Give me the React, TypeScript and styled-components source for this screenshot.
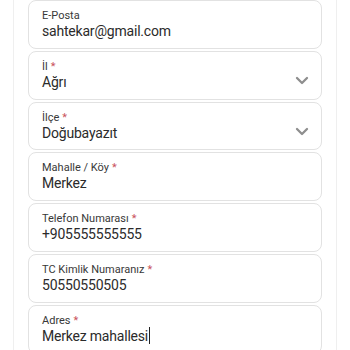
import React from 'react';
import styled, { createGlobalStyle } from 'styled-components';

const GlobalStyle = createGlobalStyle`
    html, body {
        margin: 0;
        padding: 0;
        background: #ffffff;
        overflow: hidden;
    }
    body {
        font-family: Roboto, "Noto Sans", "Liberation Sans", sans-serif;
    }
`;

const StyledPage = styled.div`
    margin: 0 13px;
    min-height: 350px;
    border-left: 1px solid #efefef;
    border-right: 1px solid #efefef;
    padding: 0 14px;
    display: flex;
    flex-direction: column;
    gap: 2px;
`;

const StyledField = styled.div`
    box-sizing: border-box;
    height: 48.8px;
    border: 1px solid #e2e2e2;
    border-radius: 8px;
    padding: 8px 12px 0 13px;
    display: flex;
    align-items: center;
    gap: 8px;
`;

const StyledText = styled.div`
    flex: 1;
    display: flex;
    flex-direction: column;
    align-self: flex-start;
`;

const StyledLabel = styled.div`
    font-size: 11px;
    line-height: 13px;
    color: #383838;
`;

const StyledAsterisk = styled.span`
    color: #c9525c;
    margin-left: 3px;
`;

const StyledValue = styled.div`
    font-size: 14px;
    line-height: 18px;
    letter-spacing: -0.2px;
    color: #2b2b2b;
    display: flex;
    align-items: center;
`;

const StyledCaret = styled.span`
    display: inline-block;
    width: 1px;
    height: 17px;
    margin-left: 1px;
    background: #222222;
`;

const StyledChevron = styled.svg`
    width: 14px;
    height: 9px;
    margin-top: 3px;
    flex-shrink: 0;
`;

type Field = {
    label: string;
    value: string;
    required?: boolean;
    select?: boolean;
    caret?: boolean;
};

const fields: Field[] = [
    { label: 'E-Posta', value: 'sahtekar@gmail.com' },
    { label: 'İl', value: 'Ağrı', required: true, select: true },
    { label: 'İlçe', value: 'Doğubayazıt', required: true, select: true },
    { label: 'Mahalle / Köy', value: 'Merkez', required: true },
    { label: 'Telefon Numarası', value: '+905555555555', required: true },
    { label: 'TC Kimlik Numaranız', value: '50550550505', required: true },
    { label: 'Adres', value: 'Merkez mahallesi', required: true, caret: true },
];

const Chevron = (): JSX.Element => (
    <StyledChevron viewBox="0 0 14 9">
        <path d="M2 2 L7 7 L12 2" fill="none" stroke="#8e8e8e" strokeWidth="2.3" strokeLinecap="round" strokeLinejoin="round" />
    </StyledChevron>
);

const App = (): JSX.Element => (
    <>
        <GlobalStyle />
        <StyledPage>
            {fields.map((field) => (
                <StyledField key={field.label}>
                    <StyledText>
                        <StyledLabel>
                            {field.label}
                            {field.required && <StyledAsterisk>*</StyledAsterisk>}
                        </StyledLabel>
                        <StyledValue>
                            {field.value}
                            {field.caret && <StyledCaret />}
                        </StyledValue>
                    </StyledText>
                    {field.select && <Chevron />}
                </StyledField>
            ))}
        </StyledPage>
    </>
);

export default App;
